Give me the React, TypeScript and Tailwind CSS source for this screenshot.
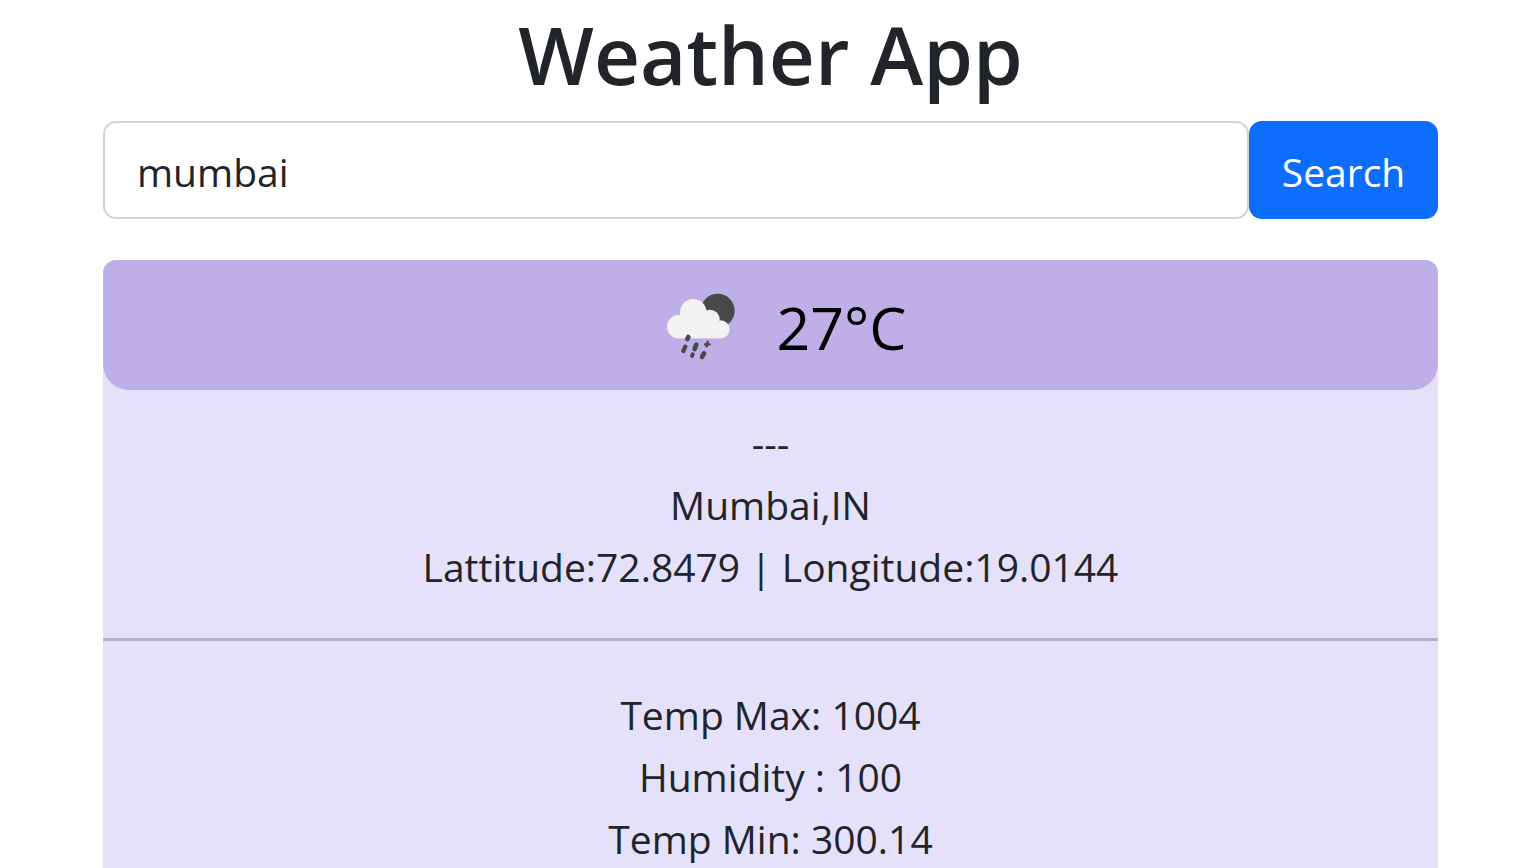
import { useState } from "react";

function RainyNightIcon() {
  return (
    <svg viewBox="-76 -75 390 390" className="size-[130px] shrink-0" role="img" aria-label="Rain, night">
      <defs>
        <filter id="soften" x="-10%" y="-10%" width="120%" height="120%">
          <feGaussianBlur stdDeviation="2.2" />
        </filter>
      </defs>
      <g filter="url(#soften)">
        <circle cx="172" cy="77" r="51" fill="#48484a" />
        <g fill="#f2f2f2">
          <circle cx="55" cy="125" r="35" />
          <circle cx="99" cy="82" r="40" />
          <circle cx="149" cy="103" r="29" />
          <circle cx="181" cy="133" r="27" />
          <rect x="55" y="112" width="126" height="48" />
        </g>
        <g stroke="#48484a" strokeLinecap="round" fill="none">
          <path d="M84 156 L81 162" strokeWidth="14" />
          <path d="M75 185 L69 198" strokeWidth="13" />
          <path d="M108 179 L103 192" strokeWidth="14" />
          <path d="M131 205 L125 216" strokeWidth="14" />
          <path d="M97 208 L95 213" strokeWidth="12" />
          <path d="M134 178 H148 M142 170 L139 184" strokeWidth="7" />
        </g>
      </g>
    </svg>
  );
}

const place = ["---", "Mumbai,IN", "Lattitude:72.8479 | Longitude:19.0144"];
const readings = ["Temp Max: 1004", "Humidity : 100", "Temp Min: 300.14"];

export default function App() {
  const [city, setCity] = useState("mumbai");

  return (
    <div className="h-screen overflow-hidden bg-white pr-[99px] pl-[103px] font-['Segoe_UI','Open_Sans',sans-serif] text-[39px] leading-[62px] text-[#212529]">
      <h1 className="mb-[13px] text-center text-[80px] leading-[108px] font-semibold">Weather App</h1>

      <form className="flex h-[98px]" onSubmit={(e) => e.preventDefault()}>
        <input
          type="text"
          aria-label="City"
          value={city}
          onChange={(e) => setCity(e.target.value)}
          className="min-w-0 flex-1 rounded-[13px] border-2 border-[#ced4da] bg-white px-8 pt-1 outline-none"
        />
        <button type="submit" className="w-[189px] rounded-[13px] bg-[#0d6efd] pt-1 text-center text-white">
          Search
        </button>
      </form>

      <section className="mt-[41px] rounded-t-[13px] bg-[#e6e1fb] text-center">
        <div className="flex h-[130px] items-center justify-center gap-3 rounded-t-[13px] rounded-b-[26px] bg-[#bdb0e8] text-[59px] text-black">
          <RainyNightIcon />
          <span className="pt-1">27°C</span>
        </div>
        <div className="pt-[22px] pb-10">
          {place.map((line) => (
            <p key={line}>{line}</p>
          ))}
        </div>
        <hr className="border-t-[3px] border-[#b5afc8]" />
        <div className="py-[43px]">
          {readings.map((line) => (
            <p key={line}>{line}</p>
          ))}
        </div>
      </section>
    </div>
  );
}
